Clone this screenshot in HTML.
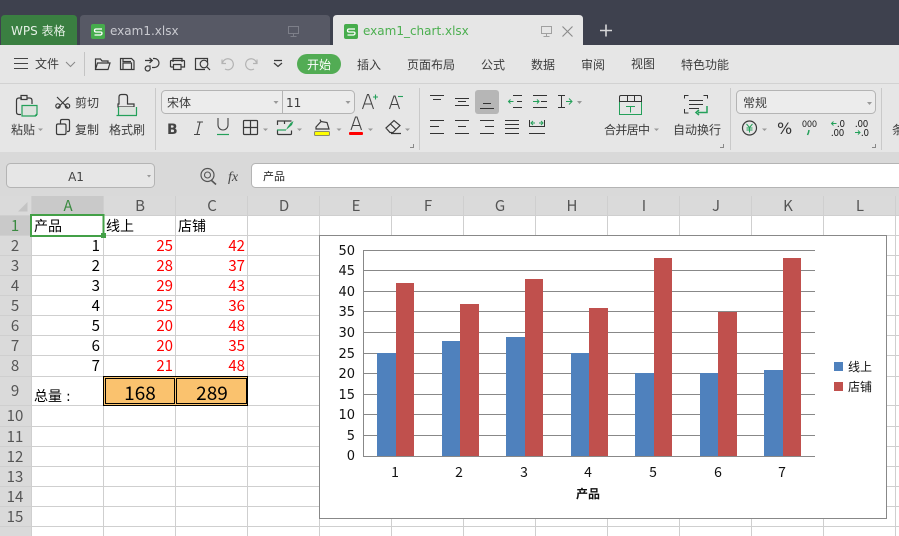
<!DOCTYPE html>
<html><head><meta charset="utf-8">
<style>
html,body{margin:0;padding:0;background:#fff;overflow:hidden;width:899px;height:536px}
svg{display:block}
text{font-family:"DejaVu Sans","WenQuanYi Zen Hei","Noto Sans CJK SC",sans-serif;font-size:12px;fill:#333}
.u{font-size:12px;fill:#3c3c3c}
.c{font-size:14px;fill:#000}
.r,.k,.h,.n,.xl,.big{font-family:"WenQuanYi Zen Hei","Noto Sans CJK SC",sans-serif}
.r{font-size:15px;fill:#f00;text-anchor:end}
.k{font-size:15px;fill:#000;text-anchor:end}
.h{font-size:15px;fill:#555;text-anchor:middle}
.ax{font-size:13px;fill:#111;text-anchor:end}
.xl{font-size:14px;fill:#111;text-anchor:middle}
.big{font-size:19px;fill:#000;text-anchor:middle}
.n{font-size:9.500px;fill:#222}
.i{fill:none;stroke:#3a3a3a;stroke-width:1.2}
.g{fill:none;stroke:#24a05a;stroke-width:1.2}
.d{fill:#999}
</style></head><body>
<svg width="899" height="536" viewBox="0 0 899 536" xmlns="http://www.w3.org/2000/svg">
<rect width="899" height="45" fill="#3e414e"/>
<path d="M1 45V19q0-4 4-4H73q4 0 4 4V45Z" fill="#3a7f41"/>
<text x="11" y="35" style="font-size:12px;fill:#e4efe4">WPS 表格</text>
<path d="M80 45V19q0-4 4-4H326q4 0 4 4V45Z" fill="#575965"/>
<rect x="91" y="24" width="14" height="15" rx="2" fill="#46ac4c"/>
<path d="M102 29H96q-1.500 0-1.500 1.500T96 32H100.500q1.500 0 1.500 1.300T100.500 35H94.500" fill="none" stroke="#fff" stroke-width="1.300"/>
<text x="110" y="35" style="font-size:12px;fill:#c9cad0">exam1.xlsx</text>
<path d="M288.500 26.500h10v7h-10ZM293.500 33.500v3M290.500 36.500h6" fill="none" stroke="#7d7f89"/>
<path d="M333 45V19q0-4 4-4H579q4 0 4 4V45Z" fill="#e6e6e6"/>
<rect x="344" y="24" width="14" height="15" rx="2" fill="#46ac4c"/>
<path d="M355 29H349q-1.500 0-1.500 1.500T349 32H353.500q1.500 0 1.500 1.300T353.500 35H347.500" fill="none" stroke="#fff" stroke-width="1.300"/>
<text x="363" y="35" style="font-size:12px;fill:#4caf50">exam1_chart.xlsx</text>
<path d="M541.500 26.500h10v7h-10ZM546.500 33.500v3M543.500 36.500h6" fill="none" stroke="#a0a0a0"/>
<path d="M562.500 26.500l10 10M572.500 26.500l-10 10" fill="none" stroke="#8a8a8a" stroke-width="1.100"/>
<path d="M600 30.500h12M606 24.500v12" stroke="#d6d6d8" stroke-width="1.600" fill="none"/>

<rect y="45" width="899" height="38" fill="#e6e6e6"/>
<rect y="83" width="899" height="1" fill="#d2d2d2"/>
<rect y="84" width="899" height="68" fill="#e6e6e6"/>
<rect y="152" width="899" height="44" fill="#d9d9d9"/>

<path d="M14 58.500h14M14 63.500h14M14 68.500h14" stroke="#444" fill="none"/>
<text x="35" y="68" class="u">文件</text>
<path d="M66 62l4.500 4.500 4.500-4.500" fill="none" stroke="#888"/>
<path d="M84.500 52v24" stroke="#c4c4c4"/>
<path d="M95.500 69.500v-10.500h5l1.500 2h6v2.500M95.500 69.500l2-6.500h12.500l-2 6.500Z" class="i"/>
<path d="M120.500 58.500h11l2.500 2.500v8.500h-13.500ZM123 69.500v-6.500h8.500v6.500M123 58.500v3h8" class="i"/>
<path d="M145 60.500h7M149.500 58l2.800 2.500-2.800 2.500M153 58.500h1.500a4.500 4.500 0 0 1 0 9H152M150 66v1.500a2.500 2.500 0 1 1-2.500-1.500Z" class="i"/>
<path d="M173 62v-3.500h9V62M170.500 67v-5.500q0-1 1-1h12q1 0 1 1V67h-3M173.500 67h-3M173.500 64.500h7.500v5h-7.500Z" class="i"/>
<path d="M205 69.500h-9.500v-11h12v3.500" class="i"/>
<circle cx="204" cy="64" r="3.800" class="i"/><path d="M207 67l3 3" class="i"/>
<path d="M222 59.500v4h4M222.500 63a5.500 5.500 0 1 1 2.500 6" fill="none" stroke="#b3b3b3" stroke-width="1.200"/>
<path d="M257 59.500v4h-4M256.500 63a5.500 5.500 0 1 0-2.500 6" fill="none" stroke="#b3b3b3" stroke-width="1.200"/>
<path d="M274 60.500h8M274 63l4 3.500 4-3.500" class="i"/>
<rect x="297" y="54" width="44" height="20" rx="10" fill="#52ac54"/>
<text x="307" y="69" style="font-size:12px;fill:#fff">开始</text>
<text x="357" y="69" class="u">插入</text>
<text x="407" y="69" class="u">页面布局</text>
<text x="481" y="69" class="u">公式</text>
<text x="531" y="69" class="u">数据</text>
<text x="581" y="69" class="u">审阅</text>
<text x="631" y="68" class="u">视图</text>
<text x="681" y="69" class="u">特色功能</text>

<!-- clipboard -->
<path d="M22 98h-3q-2.500 0-2.500 2.500v11.500q0 2.500 2.500 2.500h2M32 104v-3.500q0-2.500-2.500-2.500h-3M21 95.500h6v4h-6Z" class="i"/>
<path d="M22 105.500h15v9l-1.500 1.500H22Z" fill="#dde3de" stroke="#24a05a" stroke-width="1.200"/>
<path d="M34 116l3-3v3Z" fill="#24a05a"/>
<text x="11" y="134" class="u">粘贴</text>
<path d="M38 128.500h5l-2.500 2.500Z" class="d"/>
<path d="M57 97l11 11M68.500 97l-11 11" class="i"/><circle cx="58" cy="106" r="2.200" class="i"/><circle cx="67.500" cy="106" r="2.200" class="i"/>
<text x="75" y="107" class="u">剪切</text>
<path d="M60.500 124v-3q0-1.500 1.500-1.500h6q1.500 0 1.500 1.500v9q0 1.500-1.500 1.500h-1M56.500 125.500q0-1.500 1.500-1.500h6.500q1.500 0 1.500 1.500v7.500q0 1.500-1.500 1.500H58q-1.500 0-1.500-1.500Z" class="i"/>
<text x="75" y="134" class="u">复制</text>
<path d="M119 104v-7q0-2.500 2.500-2.500h3.500q2.500 0 2.500 2.500v7h6.500v3H118v-3Z" class="i"/>
<rect x="118.500" y="107" width="18" height="8" fill="#dde3de"/>
<path d="M118.500 107v8M136.500 107v8M116.500 115.500h20.500" class="g"/>
<text x="109" y="134" class="u">格式刷</text>
<path d="M155.500 88v62M419.500 88v62M730.500 88v62M881.500 88v62" stroke="#c9c9c9"/>

<!-- font combos -->
<rect x="161.500" y="90.500" width="193" height="23" rx="4" fill="#ececec" stroke="#b4b4b4"/>
<path d="M282.500 91v22" stroke="#b4b4b4"/>
<text x="167" y="107" class="u">宋体</text>
<text x="286" y="107" class="u">11</text>
<path d="M273.500 101h5l-2.500 3Z" class="d"/>
<path d="M345.500 101h5l-2.500 3Z" class="d"/>
<path d="M362.500 109l5-14.500h1l5 14.500M364.500 104h7.500" fill="none" stroke="#444" stroke-width="1.100"/>
<path d="M373 97h5M375.500 94.500v5" stroke="#24a05a" fill="none" stroke-width="1.100"/>
<path d="M389.500 109l4.500-13h1l4.500 13M391.500 104.500h6.500" fill="none" stroke="#444" stroke-width="1.100"/>
<path d="M398 96.500h5" stroke="#24a05a" fill="none" stroke-width="1.100"/>

<text x="167" y="134" style="font-size:14px;font-weight:bold;fill:#444">B</text>
<path d="M197 122h6M194 134.500h6M200 122l-3 12.500" fill="none" stroke="#444" stroke-width="1.100"/>
<path d="M218 118v7a5 5 0 0 0 10 0v-7" fill="none" stroke="#444" stroke-width="1.100"/>
<path d="M217 134.500h12" stroke="#24a05a" stroke-width="1.200"/>
<rect x="243.500" y="120.500" width="14" height="14" rx="1" class="i"/><path d="M250.500 120.500v14M243.500 127.500h14" class="i"/>
<path d="M263 128.500h5l-2.500 2.500Z" class="d"/>
<path d="M277.500 125v-4h14M277.500 130v3.500q0 1 1 1h12q1 0 1-1v-3M284.500 121v3" class="i"/>
<path d="M286 130l6-5 1.500-4-3 2-3 4Z" fill="#24a05a"/><path d="M277 130h9" stroke="#24a05a" stroke-width="1.200"/>
<path d="M297 128.500h5l-2.500 2.500Z" class="d"/>
<path d="M316 127l5-5.500 6 1 2 6.500H316ZM321 121.500l-1-2" class="i"/>
<rect x="314.500" y="131.500" width="15" height="4" rx="1" fill="#ff0" stroke="#8b8b6a"/>
<path d="M336.500 128.500h5l-2.500 2.500Z" class="d"/>
<path d="M351 130l4.500-13h1.500l4.500 13M353 125.500h7" fill="none" stroke="#444" stroke-width="1.100"/>
<rect x="349" y="132" width="14" height="3" rx="1" fill="#f00"/>
<path d="M368 128.500h5l-2.500 2.500Z" class="d"/>
<path d="M386 128l8-7.500 6 5-7 7h-3ZM390.500 124l5.500 5.500M391 133.500h10" class="i"/>
<path d="M405 128.500h5l-2.500 2.500Z" class="d"/>
<path d="M410 147.500h3.500v-3.500" stroke="#888" fill="none"/>

<!-- align -->
<path d="M430 95.500h14M433 99.500h8" stroke="#333" fill="none"/>
<path d="M455 98.500h14M458 101.500h8M455 105.500h14" stroke="#333" fill="none"/>
<rect x="475" y="90" width="24" height="24" rx="3" fill="#b6b6b6"/>
<path d="M483 103.500h8M480 108.500h14" stroke="#333" fill="none"/>
<path d="M513 95.500h9M517 101.500h5M513 107.500h9" stroke="#333" fill="none"/><path d="M513.500 101.500h-5M510.500 99.500l-2 2 2 2" stroke="#24a05a" fill="none"/>
<path d="M533 95.500h14M541 101.500h6M533 107.500h14" stroke="#333" fill="none"/><path d="M533 101.500h6M537 99.500l2 2-2 2" stroke="#24a05a" fill="none"/>
<path d="M558 95.500h7M558 107.500h7M561.500 95.500v12" stroke="#333" fill="none"/><path d="M566 101.500h6M569 98.500l3 3-3 3" stroke="#24a05a" fill="none"/>
<path d="M577 101h5l-2.500 3Z" class="d"/>
<path d="M430 120.500h14M430 126.500h9M430 133.500h14" stroke="#333" fill="none"/>
<path d="M455 120.500h14M458 126.500h8M455 133.500h14" stroke="#333" fill="none"/>
<path d="M480 120.500h14M485 126.500h9M480 133.500h14" stroke="#333" fill="none"/>
<path d="M505 120.500h14M505 124.500h14M505 128.500h14M505 133.500h14" stroke="#333" fill="none"/>
<path d="M529.500 120v6M544.500 120v6M529 126.500h16M529 133.500h16" stroke="#333" fill="none"/><path d="M531 123h4M533 121l-2 2 2 2M543 123h-4M541 121l2 2-2 2" stroke="#24a05a" fill="none"/>

<!-- merge -->
<path d="M619.500 102v-5q0-1.500 1.500-1.500h19q1.500 0 1.500 1.500v5M619.500 101.500h22M627.500 96v5M634.500 96v5" stroke="#333" fill="none"/>
<path d="M619.500 102v12.500h22V102" stroke="#24a05a" fill="none"/>
<path d="M626 106.500h9M630.500 106.500v6" stroke="#24a05a" fill="none"/>
<text x="604" y="134" class="u" textLength="46">合并居中</text>
<path d="M654 128.500h5l-2.500 2.500Z" class="d"/>
<path d="M684.500 98.500v-3h4M703.500 95.500h4v3M684.500 109v4h4M689 100.500h14M689 104.500h14M689 108.500h10" stroke="#333" fill="none"/>
<path d="M707 106v6.500h-9M699 110l-3 2.500 3 2.500" stroke="#24a05a" stroke-width="1.500" fill="none"/>
<text x="673" y="134" class="u">自动换行</text>
<path d="M720 147.500h3.500v-3.500" stroke="#888" fill="none"/>

<rect x="736.500" y="90.500" width="139" height="23" rx="4" fill="#ececec" stroke="#b4b4b4"/>
<text x="743" y="107" class="u">常规</text>
<path d="M867 102h5l-2.500 3Z" class="d"/>
<circle cx="749.500" cy="128" r="7" class="i"/>
<path d="M746.500 124l3 3.500 3-3.500M749.500 127.500v5M746.500 128h6M746.500 130h6" stroke="#24a05a" fill="none"/>
<path d="M762 128.500h5l-2.500 2.500Z" class="d"/>
<text x="777" y="134" style="font-size:16px;fill:#333">%</text>
<text x="802" y="127" class="n" style="font-size:9px">000</text>
<path d="M809 130l-.5 2.500-1 2.500" fill="none" stroke="#24a05a" stroke-width="1.500"/>
<path d="M836.500 123.500h-5M833.500 121.500l-2 2 2 2" stroke="#24a05a" fill="none"/>
<text x="837" y="127" class="n">.0</text>
<text x="831" y="136" class="n">.00</text>
<text x="855" y="127" class="n">.00</text>
<path d="M855 132.500h5M858 130.500l2 2-2 2" stroke="#24a05a" fill="none"/>
<text x="861" y="136" class="n">.0</text>
<path d="M872 147.500h3.500v-3.500" stroke="#888" fill="none"/>
<text x="892" y="134" class="u">条件格式</text>

<!-- formula bar -->
<rect x="6.500" y="163.500" width="148" height="24" rx="4" fill="#e6e6e6" stroke="#b4b4b4"/>
<text x="76" y="181" style="font-size:12px;fill:#444;text-anchor:middle">A1</text>
<path d="M147 175h4l-2 2.500Z" class="d"/>
<circle cx="207.500" cy="175" r="6.500" fill="none" stroke="#555" stroke-width="1.200"/><circle cx="207.500" cy="175" r="3" fill="none" stroke="#555" stroke-width="1.100"/><path d="M211 180l5 4.500" fill="none" stroke="#555" stroke-width="1.600"/>
<text x="228" y="181" style="font-size:14px;font-family:'Liberation Serif',serif;font-style:italic;fill:#444">fx</text>
<rect x="251.500" y="163.500" width="660" height="24" rx="4" fill="#fff" stroke="#b4b4b4"/>
<text x="263" y="180" style="font-size:11px;fill:#222">产品</text>

<!-- headers -->
<rect y="196" width="899" height="19" fill="#dadada"/>
<rect y="215" width="31" height="321" fill="#dadada"/>
<rect x="0" y="215" width="31" height="20" fill="#c9c9c9"/>
<rect x="32" y="196" width="72" height="19" fill="#c9c9c9"/>
<path d="M18 211.500L27.500 202v9.500Z" fill="#c4c4c4"/>
<path d="M31.500 196v340M103.500 196v340M175.500 196v340M247.500 196v340M319.500 196v340M391.500 196v340M463.500 196v340M535.500 196v340M607.500 196v340M679.500 196v340M751.500 196v340M823.500 196v340M895.500 196v340" stroke="#cfcfcf" fill="none"/>
<path d="M0 215.500H899M0 235.500H899M0 255.500H899M0 275.500H899M0 295.500H899M0 315.500H899M0 335.500H899M0 355.500H899M0 376.500H899M0 405.500H899M0 426.500H899M0 446.500H899M0 466.500H899M0 486.500H899M0 506.500H899M0 526.500H899" stroke="#cfcfcf" fill="none"/>
<text x="68" y="211" class="h" style="fill:#3a8a40">A</text>
<text x="140" y="211" class="h">B</text><text x="212" y="211" class="h">C</text><text x="284" y="211" class="h">D</text>
<text x="356" y="211" class="h">E</text><text x="428" y="211" class="h">F</text><text x="500" y="211" class="h">G</text>
<text x="572" y="211" class="h">H</text><text x="644" y="211" class="h">I</text><text x="716" y="211" class="h">J</text>
<text x="788" y="211" class="h">K</text><text x="860" y="211" class="h">L</text>
<text x="15" y="231" class="h" style="fill:#3a8a40">1</text>
<text x="15" y="251" class="h">2</text><text x="15" y="271" class="h">3</text><text x="15" y="291" class="h">4</text>
<text x="15" y="311" class="h">5</text><text x="15" y="331" class="h">6</text><text x="15" y="351" class="h">7</text>
<text x="15" y="371" class="h">8</text><text x="15" y="396" class="h">9</text><text x="15" y="421" class="h">10</text>
<text x="15" y="442" class="h">11</text><text x="15" y="462" class="h">12</text><text x="15" y="482" class="h">13</text>
<text x="15" y="502" class="h">14</text><text x="15" y="522" class="h">15</text>

<!-- cells -->
<text x="34" y="231" class="c">产品</text><text x="106" y="231" class="c">线上</text><text x="178" y="231" class="c">店铺</text>
<text x="100" y="251" class="k">1</text><text x="173" y="251" class="r">25</text><text x="245" y="251" class="r">42</text>
<text x="100" y="271" class="k">2</text><text x="173" y="271" class="r">28</text><text x="245" y="271" class="r">37</text>
<text x="100" y="291" class="k">3</text><text x="173" y="291" class="r">29</text><text x="245" y="291" class="r">43</text>
<text x="100" y="311" class="k">4</text><text x="173" y="311" class="r">25</text><text x="245" y="311" class="r">36</text>
<text x="100" y="331" class="k">5</text><text x="173" y="331" class="r">20</text><text x="245" y="331" class="r">48</text>
<text x="100" y="351" class="k">6</text><text x="173" y="351" class="r">20</text><text x="245" y="351" class="r">35</text>
<text x="100" y="371" class="k">7</text><text x="173" y="371" class="r">21</text><text x="245" y="371" class="r">48</text>
<text x="34" y="401" class="c">总量<tspan dx="4">:</tspan></text>
<rect x="103" y="376" width="145" height="30" fill="#000"/>
<rect x="104" y="377" width="143" height="28" fill="#fbc56f"/>
<rect x="105.500" y="378.500" width="69" height="25" fill="#fac26e" stroke="#000"/>
<rect x="176.500" y="378.500" width="70" height="25" fill="#fac26e" stroke="#000"/>
<text x="140" y="400" class="big">168</text>
<text x="212" y="400" class="big">289</text>
<rect x="31" y="215" width="72.500" height="21" fill="none" stroke="#43a047" stroke-width="2"/>
<rect x="101" y="233" width="5" height="5" fill="#43a047"/>

<!-- chart -->
<rect x="319.500" y="235.500" width="567" height="283" fill="#fff" stroke="#888"/>
<path d="M363 250.500H815M363 270.500H815M363 291.500H815M363 311.500H815M363 332.500H815M363 353.500H815M363 373.500H815M363 394.500H815M363 414.500H815M363 435.500H815M363 456.500H815M363.500 250V457" stroke="#888" fill="none"/>
<g fill="#4f81bd">
<rect x="377" y="353" width="19" height="103"/><rect x="442" y="341" width="18" height="115"/><rect x="506" y="337" width="19" height="119"/>
<rect x="571" y="353" width="18" height="103"/><rect x="635" y="373" width="19" height="83"/><rect x="700" y="373" width="18" height="83"/><rect x="764" y="370" width="19" height="86"/>
</g>
<g fill="#c0504d">
<rect x="396" y="283" width="18" height="173"/><rect x="460" y="304" width="19" height="152"/><rect x="525" y="279" width="18" height="177"/>
<rect x="589" y="308" width="19" height="148"/><rect x="654" y="258" width="18" height="198"/><rect x="718" y="312" width="19" height="144"/><rect x="783" y="258" width="18" height="198"/>
</g>
<text x="355" y="255" class="ax">50</text><text x="355" y="275" class="ax">45</text><text x="355" y="296" class="ax">40</text><text x="355" y="316" class="ax">35</text>
<text x="355" y="337" class="ax">30</text><text x="355" y="358" class="ax">25</text><text x="355" y="378" class="ax">20</text><text x="355" y="399" class="ax">15</text>
<text x="355" y="419" class="ax">10</text><text x="355" y="440" class="ax">5</text><text x="355" y="460" class="ax">0</text>
<text x="395" y="477" class="xl">1</text><text x="459" y="477" class="xl">2</text><text x="524" y="477" class="xl">3</text><text x="588" y="477" class="xl">4</text>
<text x="653" y="477" class="xl">5</text><text x="718" y="477" class="xl">6</text><text x="782" y="477" class="xl">7</text>
<text x="588" y="498" style="font-size:12px;font-weight:bold;fill:#111;text-anchor:middle">产品</text>
<rect x="834" y="362" width="9" height="9" fill="#4f81bd"/><rect x="834" y="382" width="9" height="9" fill="#c0504d"/>
<text x="848" y="371" style="font-size:12px;fill:#111">线上</text><text x="848" y="391" style="font-size:12px;fill:#111">店铺</text>
</svg>
</body></html>
